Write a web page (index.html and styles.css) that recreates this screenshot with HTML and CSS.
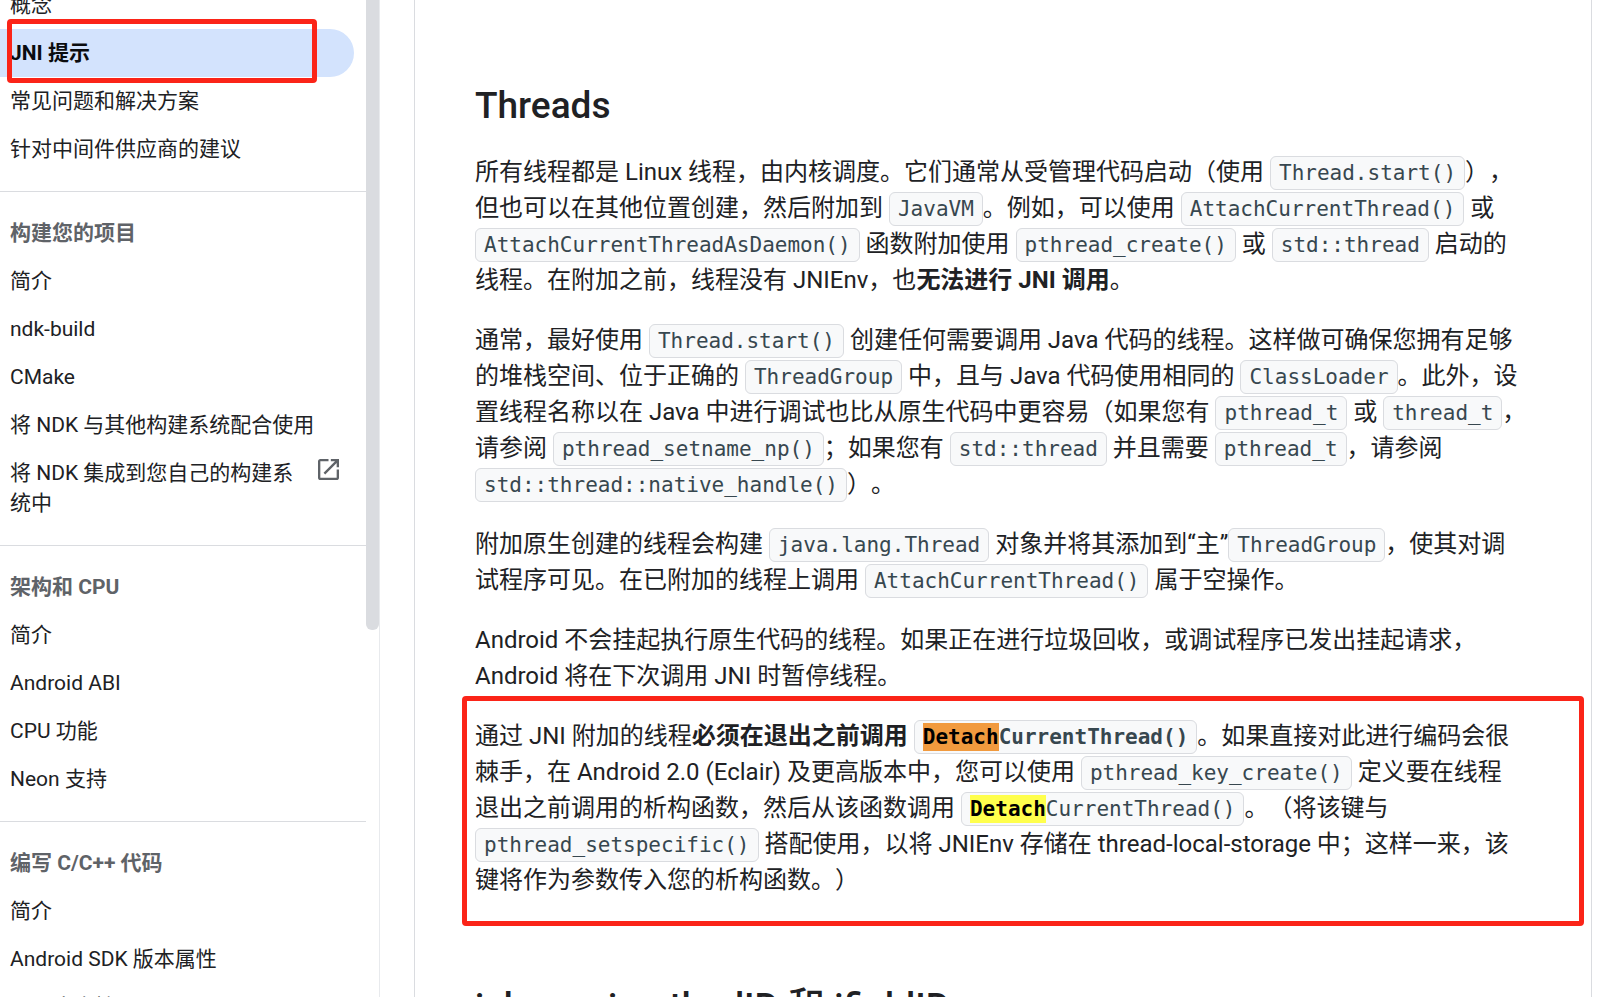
FILE: index.html
```html
<!DOCTYPE html>
<html lang="zh-CN">
<head>
<meta charset="utf-8">
<title>JNI 提示</title>
<link rel="stylesheet" href="styles.css">
</head>
<body>
<div class="page">
  <aside class="sidebar">
    <nav class="nav">
      <ul class="nav-group">
        <li><a class="nav-link" href="#">概念</a></li>
        <li class="nav-current"><a class="nav-link active" href="#">JNI 提示</a><span class="nav-mark"></span></li>
        <li><a class="nav-link" href="#">常见问题和解决方案</a></li>
        <li><a class="nav-link" href="#">针对中间件供应商的建议</a></li>
      </ul>
      <ul class="nav-group">
        <li class="nav-heading">构建您的项目</li>
        <li><a class="nav-link" href="#">简介</a></li>
        <li><a class="nav-link" href="#">ndk-build</a></li>
        <li><a class="nav-link" href="#">CMake</a></li>
        <li><a class="nav-link" href="#">将 NDK 与其他构建系统配合使用</a></li>
        <li><a class="nav-link external" href="#"><span>将 NDK 集成到您自己的构建系统中</span>
          <svg class="external-icon" viewBox="3 3 18 18" aria-hidden="true"><path fill="currentColor" d="M19 19H5V5h7V3H5c-1.11 0-2 .9-2 2v14c0 1.1.89 2 2 2h14c1.1 0 2-.9 2-2v-7h-2v7zM14 3v2h3.59l-9.83 9.83 1.41 1.41L19 6.41V10h2V3h-7z"/></svg></a></li>
      </ul>
      <ul class="nav-group">
        <li class="nav-heading">架构和 CPU</li>
        <li><a class="nav-link" href="#">简介</a></li>
        <li><a class="nav-link" href="#">Android ABI</a></li>
        <li><a class="nav-link" href="#">CPU 功能</a></li>
        <li><a class="nav-link" href="#">Neon 支持</a></li>
      </ul>
      <ul class="nav-group">
        <li class="nav-heading">编写 C/C++ 代码</li>
        <li><a class="nav-link" href="#">简介</a></li>
        <li><a class="nav-link" href="#">Android SDK 版本属性</a></li>
        <li><a class="nav-link" href="#">C++ 库支持</a></li>
      </ul>
    </nav>
    <div class="scroll-thumb"></div>
  </aside>
  <main class="article">
    <h2 class="title">Threads</h2>
    <p>所有线程都是 Linux 线程，由内核调度。它们通常从受管理代码启动（使用 <code>Thread.start()</code>），<br>但也可以在其他位置创建，然后附加到 <code>JavaVM</code>。例如，可以使用 <code>AttachCurrentThread()</code> 或<br><code>AttachCurrentThreadAsDaemon()</code> 函数附加使用 <code>pthread_create()</code> 或 <code>std::thread</code> 启动的<br>线程。在附加之前，线程没有 JNIEnv，也<strong>无法进行 JNI 调用</strong>。</p>
    <p>通常，最好使用 <code>Thread.start()</code> 创建任何需要调用 Java 代码的线程。这样做可确保您拥有足够<br>的堆栈空间、位于正确的 <code>ThreadGroup</code> 中，且与 Java 代码使用相同的 <code>ClassLoader</code>。此外，设<br>置线程名称以在 Java 中进行调试也比从原生代码中更容易（如果您有 <code>pthread_t</code> 或 <code>thread_t</code>，<br>请参阅 <code>pthread_setname_np()</code>；如果您有 <code>std::thread</code> 并且需要 <code>pthread_t</code>，请参阅<br><code>std::thread::native_handle()</code>）。</p>
    <p>附加原生创建的线程会构建 <code>java.lang.Thread</code> 对象并将其添加到“主”<code>ThreadGroup</code>，使其对调<br>试程序可见。在已附加的线程上调用 <code>AttachCurrentThread()</code> 属于空操作。</p>
    <p>Android 不会挂起执行原生代码的线程。如果正在进行垃圾回收，或调试程序已发出挂起请求，<br>Android 将在下次调用 JNI 时暂停线程。</p>
    <div class="marked">
      <p>通过 JNI 附加的线程<strong>必须在退出之前调用 <code><mark class="hit current">Detach</mark>CurrentThread()</code></strong>。如果直接对此进行编码会很<br>棘手，在 Android 2.0 (Eclair) 及更高版本中，您可以使用 <code>pthread_key_create()</code> 定义要在线程<br>退出之前调用的析构函数，然后从该函数调用 <code><mark class="hit">Detach</mark>CurrentThread()</code>。（将该键与<br><code>pthread_setspecific()</code> 搭配使用，以将 JNIEnv 存储在 thread-local-storage 中；这样一来，该<br>键将作为参数传入您的析构函数。）</p>
    </div>
    <h2 class="title">jclass、jmethodID 和 jfieldID</h2>
  </main>
</div>
</body>
</html>
```
FILE: styles.css
```css
* { box-sizing: border-box; }

body {
  margin: 0;
  background: #fff;
  color: #202124;
  font-family: Roboto, "Noto Sans CJK SC", sans-serif;
  text-spacing-trim: space-all;
}

.page {
  display: flex;
  height: 100vh;
  overflow: hidden;
}

.sidebar {
  display: flex;
  flex: 0 0 380px;
  align-items: flex-start;
  border-right: 1px solid #e8eaed;
}

.nav {
  flex: 1;
  margin-top: -19px;
  font-size: 21px;
  line-height: 30px;
}

.nav-group {
  margin: 0;
  padding: 0 12px 18px 0;
  list-style: none;
}

.nav-group + .nav-group {
  padding-top: 17px;
  border-top: 1px solid #dadce0;
}

.nav-current { position: relative; }

.nav-link,
.nav-heading {
  display: block;
  padding: 9px 0 9px 10px;
}

.nav-link {
  color: #202124;
  text-decoration: none;
}

.nav-heading {
  color: #5f6368;
  font-weight: 700;
}

.nav-link.active {
  border-radius: 0 24px 24px 0;
  background: #d3e3fd;
  color: #0b0c0f;
  font-weight: 700;
}

/* Frame drawn over the current entry */
.nav-mark {
  position: absolute;
  inset: -10px 37px -6px 7px;
  border: 5px solid #fb2418;
  border-radius: 4px;
}

.external {
  display: flex;
  gap: 22px;
  padding-right: 15px;
}

.external span { flex: 1; }

.external-icon {
  width: 21px;
  height: 21px;
  margin-top: 1px;
  color: #5f6368;
}

.scroll-thumb {
  width: 13px;
  height: 630px;
  border-radius: 0 0 6px 6px;
  background: #dadce0;
}

.article {
  flex: 1;
  margin: 0 5px 0 34px;
  padding: 82px 0 0 60px;
  border: solid #dadce0;
  border-width: 0 1px;
  font-size: 24px;
  line-height: 36px;
  white-space: nowrap;
}

.title {
  margin: 0 0 24px;
  font-size: 37px;
  font-weight: 500;
  line-height: 48px;
}

p { margin: 0 0 24px; }

code {
  padding: 4px 8px;
  border: 1px solid #dadce0;
  border-radius: 6px;
  background: #f8f9fa;
  color: #37474f;
  font-family: "DejaVu Sans Mono", monospace;
  font-size: 21px;
  line-height: 24px;
}

strong { font-weight: 700; }

.hit {
  padding: 2px 0;
  background: #ffff4d;
  color: #000;
  font-weight: 700;
}

.hit.current { background: #f19a3e; }

.marked {
  margin: -22px 7px 57px -13px;
  padding: 17px 8px 23px;
  border: 5px solid #fb2418;
  border-radius: 4px;
}

.marked p { margin: 0; }
```
